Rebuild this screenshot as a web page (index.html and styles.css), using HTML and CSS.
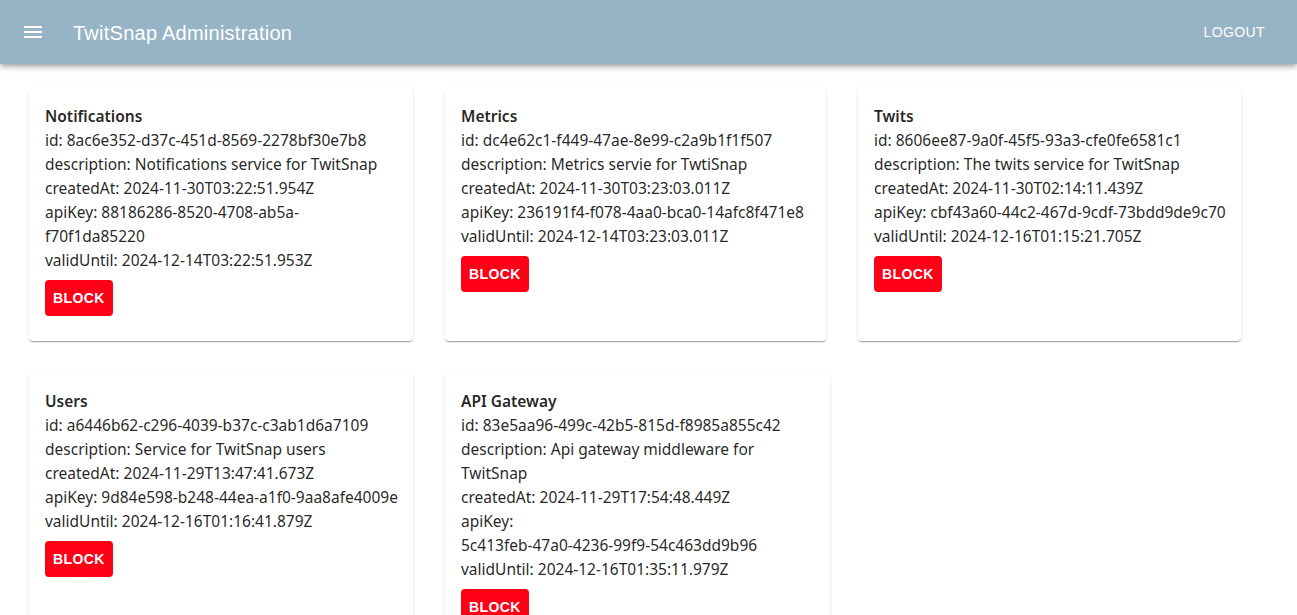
FILE: index.html
```html
<!DOCTYPE html>
<html lang="en">
<head>
<meta charset="utf-8">
<title>TwitSnap Administration</title>
<link rel="stylesheet" href="styles.css">
</head>
<body>
<header class="appbar">
  <button class="menu-btn" aria-label="menu">
    <svg viewBox="0 0 24 24" width="24" height="24"><path fill="#fff" d="M3 18h18v-2H3zm0-5h18v-2H3zm0-7v2h18V6z"/></svg>
  </button>
  <h1 class="appbar-title">TwitSnap Administration</h1>
  <button class="logout-btn">Logout</button>
</header>
<main class="services">
  <div class="card card--w384">
    <h2 class="card-title">Notifications</h2>
    <p class="field">id: 8ac6e352-d37c-451d-8569-2278bf30e7b8</p>
    <p class="field">description: Notifications service for TwitSnap</p>
    <p class="field">createdAt: 2024-11-30T03:22:51.954Z</p>
    <p class="field">apiKey: 88186286-8520-4708-ab5a-f70f1da85220</p>
    <p class="field">validUntil: 2024-12-14T03:22:51.953Z</p>
    <button class="block-btn">Block</button>
  </div>
  <div class="card card--w381">
    <h2 class="card-title">Metrics</h2>
    <p class="field">id: dc4e62c1-f449-47ae-8e99-c2a9b1f1f507</p>
    <p class="field">description: Metrics servie for TwtiSnap</p>
    <p class="field">createdAt: 2024-11-30T03:23:03.011Z</p>
    <p class="field field--nowrap">apiKey: 236191f4-f078-4aa0-bca0-14afc8f471e8</p>
    <p class="field">validUntil: 2024-12-14T03:23:03.011Z</p>
    <button class="block-btn">Block</button>
  </div>
  <div class="card card--w383">
    <h2 class="card-title">Twits</h2>
    <p class="field">id: 8606ee87-9a0f-45f5-93a3-cfe0fe6581c1</p>
    <p class="field">description: The twits service for TwitSnap</p>
    <p class="field">createdAt: 2024-11-30T02:14:11.439Z</p>
    <p class="field field--nowrap">apiKey: cbf43a60-44c2-467d-9cdf-73bdd9de9c70</p>
    <p class="field">validUntil: 2024-12-16T01:15:21.705Z</p>
    <button class="block-btn">Block</button>
  </div>
  <div class="card card--w384">
    <h2 class="card-title">Users</h2>
    <p class="field">id: a6446b62-c296-4039-b37c-c3ab1d6a7109</p>
    <p class="field">description: Service for TwitSnap users</p>
    <p class="field">createdAt: 2024-11-29T13:47:41.673Z</p>
    <p class="field field--nowrap">apiKey: 9d84e598-b248-44ea-a1f0-9aa8afe4009e</p>
    <p class="field">validUntil: 2024-12-16T01:16:41.879Z</p>
    <button class="block-btn">Block</button>
  </div>
  <div class="card card--w385">
    <h2 class="card-title">API Gateway</h2>
    <p class="field">id: 83e5aa96-499c-42b5-815d-f8985a855c42</p>
    <p class="field">description: Api gateway middleware for TwitSnap</p>
    <p class="field">createdAt: 2024-11-29T17:54:48.449Z</p>
    <p class="field">apiKey: <span class="field-value--block">5c413feb-47a0-4236-99f9-54c463dd9b96</span></p>
    <p class="field">validUntil: 2024-12-16T01:35:11.979Z</p>
    <button class="block-btn">Block</button>
  </div>
</main>
</body>
</html>
```
FILE: styles.css
```css
* { box-sizing: border-box; }
html, body { margin: 0; padding: 0; background: #fff; }
body { font-family: "Noto Sans", "Open Sans", sans-serif; }

.appbar {
  height: 64px;
  background: #97b3c6;
  display: flex;
  align-items: center;
  padding: 0 24px 0 21px;
  box-shadow: 0 2px 4px -1px rgba(0,0,0,0.2), 0 4px 5px 0 rgba(0,0,0,0.14), 0 1px 10px 0 rgba(0,0,0,0.12);
  position: relative;
  z-index: 2;
}
.menu-btn {
  background: none;
  border: 0;
  padding: 0;
  width: 24px;
  height: 24px;
  display: flex;
  cursor: pointer;
}
.appbar-title {
  margin: 2px 0 0 28px;
  font-family: "Liberation Sans", Arial, sans-serif;
  font-size: 20px;
  font-weight: 400;
  color: #fff;
  flex: 1;
  letter-spacing: 0.25px;
}
.logout-btn {
  background: none;
  border: 0;
  color: #fff;
  font-family: "Liberation Sans", Arial, sans-serif;
  font-size: 14px;
  text-transform: uppercase;
  letter-spacing: 0.4px;
  padding: 6px 8px;
  cursor: pointer;
}

.services {
  display: flex;
  flex-wrap: wrap;
  align-items: stretch;
  column-gap: 32px;
  row-gap: 32px;
  padding: 24px 29px;
}
.card {
  background: #fff;
  border-radius: 4px;
  box-shadow: 0 2px 1px -1px rgba(0,0,0,0.2), 0 1px 1px 0 rgba(0,0,0,0.14), 0 1px 3px 0 rgba(0,0,0,0.12);
  padding: 16px 16px 25px;
  color: rgba(0,0,0,0.87);
}
.card--w381 { width: 381px; }
.card--w383 { width: 383px; }
.card--w384 { width: 384px; }
.card--w385 { width: 385px; }

.card-title {
  margin: 0;
  font-size: 15.5px;
  line-height: 24px;
  font-weight: 600;
}
.field {
  margin: 0;
  font-size: 15.5px;
  line-height: 24px;
}
.field--nowrap { white-space: nowrap; }
.field-value--block { display: block; }

.block-btn {
  margin-top: 8px;
  height: 36px;
  padding: 0 8px;
  background: #ff0016;
  color: #fff;
  border: 0;
  border-radius: 4px;
  font-family: "Liberation Sans", Arial, sans-serif;
  font-weight: 700;
  font-size: 14px;
  letter-spacing: 0.4px;
  text-transform: uppercase;
  cursor: pointer;
}
```
